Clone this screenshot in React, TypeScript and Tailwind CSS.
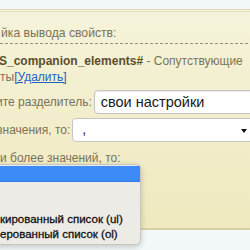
export default function App() {
  return (
    <div className="relative w-[250px] h-[250px] overflow-hidden bg-[#f3f8fa] font-['Liberation_Sans',Arial,sans-serif] text-[12px] leading-[16px] text-[#7b7358]">
      <div className="mt-[9px] border-t border-[#dcd5b0]">
        <div className="border-t border-[#f8f6e4]">
          <div className="h-[219px] border-t border-[#e3dcb8] border-b-2 border-b-[#d9d0a6] bg-gradient-to-b from-[#f5f3da] to-[#efe9be] pt-[13px]">
            <div className="whitespace-nowrap pl-[1px] text-[12.2px]">йка вывода свойств:</div>
            <div className="mt-[2px] h-px bg-[repeating-linear-gradient(to_right,#9a8f6e_0_3px,transparent_3px_5px)]" />
            <div className="mt-[9px] whitespace-nowrap -ml-[1px]">
              <span className="font-bold text-[#5b4e2b]">S_companion_elements#</span> - Сопутствующие
            </div>
            <div className="whitespace-nowrap">
              ты<a className="text-[#1c62c4] underline">[Удалить]</a>
            </div>
            <div className="mt-[5px] flex items-center h-[24px]">
              <span className="whitespace-nowrap -ml-[4px]">ите разделитель:</span>
              <div className="ml-[2px] h-[24px] w-[170px] shrink-0 rounded-[4px] border border-[#c4c4c4] bg-white pl-[6px] text-[14.5px] leading-[22px] text-[#1a1a1a] shadow-[inset_0_1px_1px_rgba(0,0,0,0.08)]">
                свои настройки
              </div>
            </div>
            <div className="mt-[4px] flex items-center h-[24px]">
              <span className="whitespace-nowrap -ml-[3px]">значения, то:</span>
              <div className="ml-[2px] relative h-[24px] w-[190px] shrink-0 rounded-[4px] border border-[#c4c4c4] bg-white pl-[9px] text-[14px] leading-[20px] text-[#1a1a1a]">
                ,
                <div className="absolute left-[168px] top-[10px] w-0 h-0 border-l-[3px] border-r-[3px] border-t-[4px] border-l-transparent border-r-transparent border-t-[#111]" />
              </div>
            </div>
            <div className="mt-[8px] whitespace-nowrap">и более значений, то:</div>
          </div>
        </div>
      </div>
      <div className="absolute left-[-12px] top-[164px] w-[153px] h-[81px] rounded-[5px] border border-[#c9c6bc] bg-[#edebe6] pt-[1px] shadow-[0_2px_6px_rgba(0,0,0,0.2)] text-[#111] text-[11.5px] [-webkit-text-stroke:0.3px_#111]">
        <div className="h-[16px] bg-[#3c8bf6] border-b border-[#2f7de8]" />
        <div className="h-[30px]" />
        <div className="h-[15px] pl-[11px] leading-[15px] whitespace-nowrap">кированный список (ul)</div>
        <div className="h-[15px] pl-[11px] leading-[15px] whitespace-nowrap">ерованный список (ol)</div>
      </div>
    </div>
  );
}
